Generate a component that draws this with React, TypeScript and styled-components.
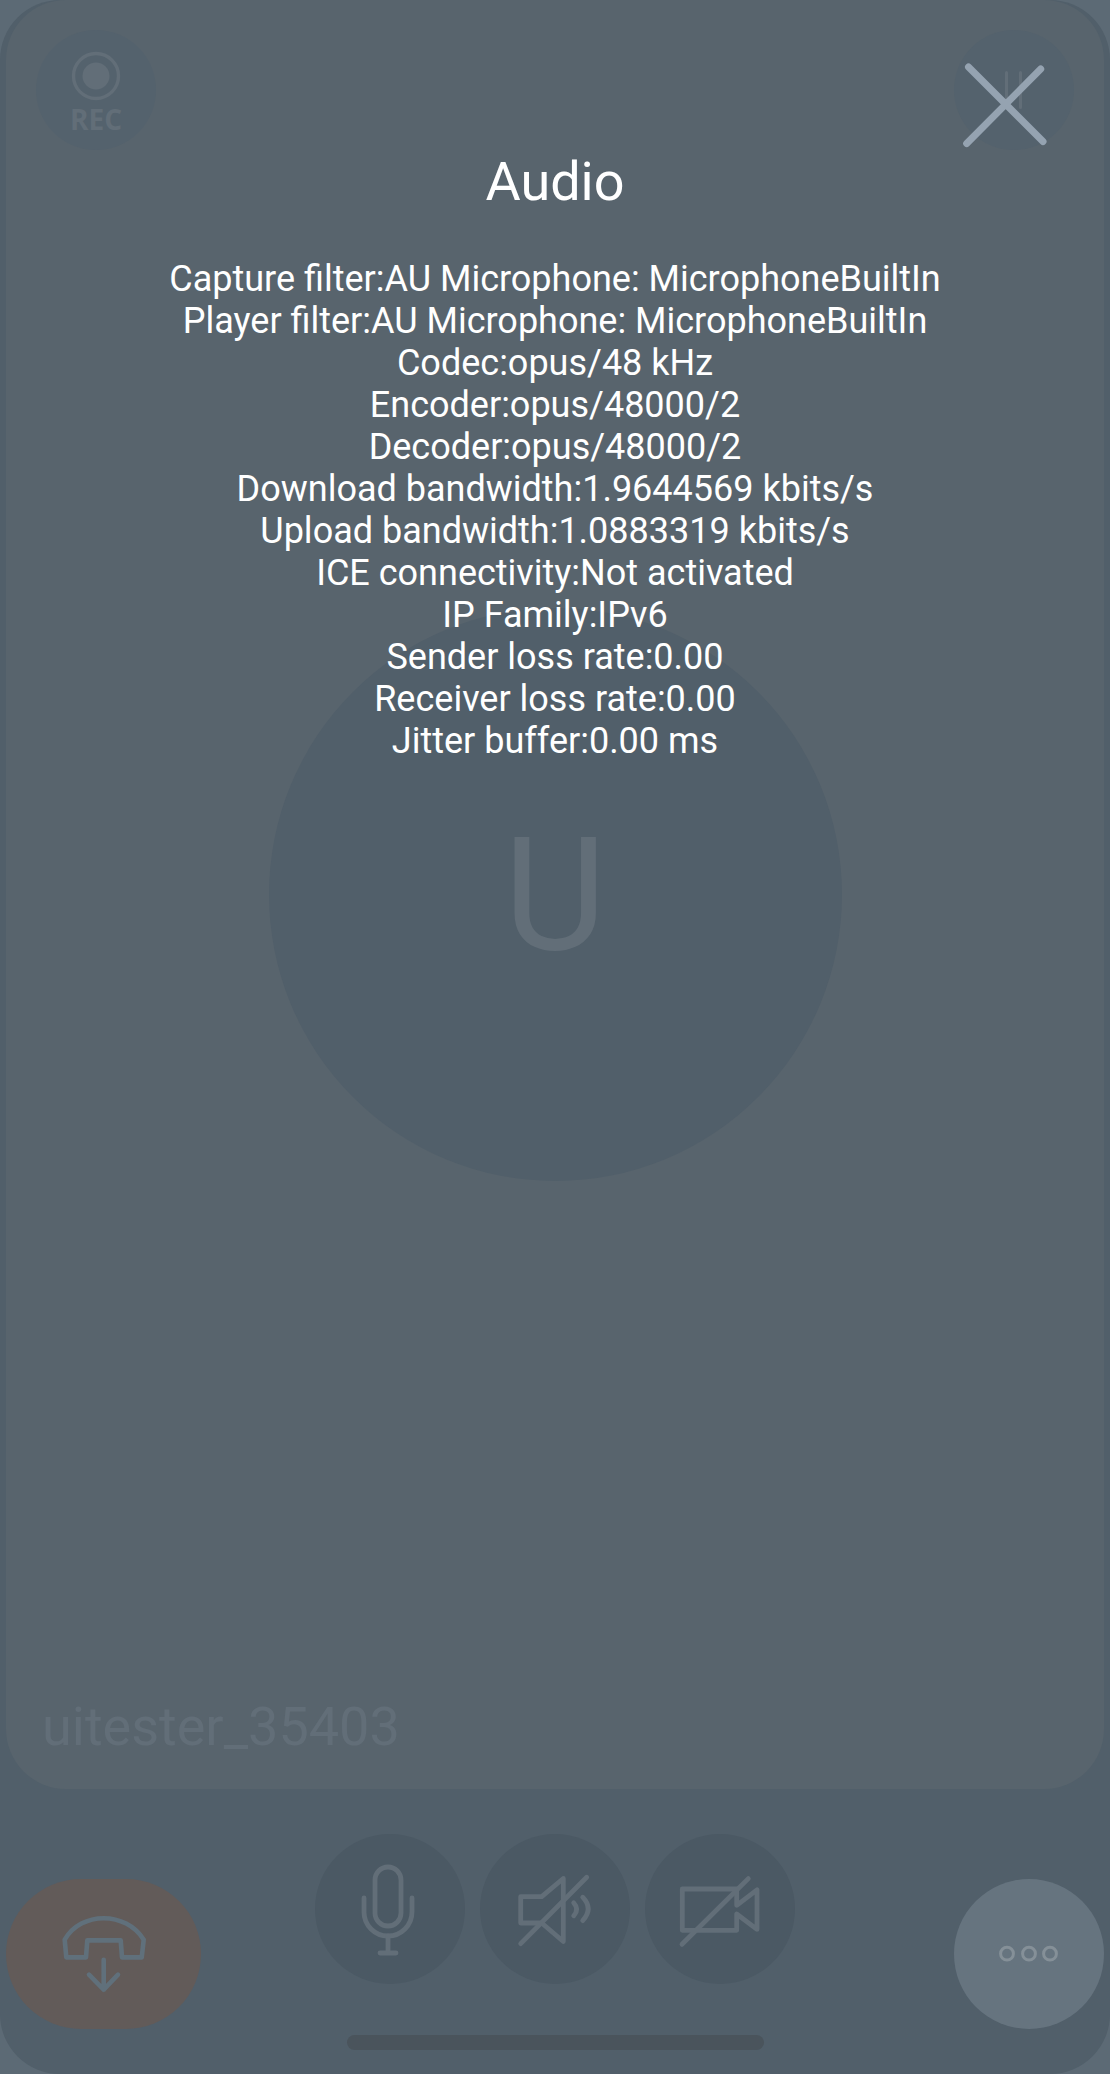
import React from "react";
import styled, { createGlobalStyle } from "styled-components";

const colors = {
  page: "#5c6a75",
  shell: "#515f6a",
  card: "#58646d",
  chip: "#54626d",
  faint: "#626e78",
  control: "#4b5964",
  hangup: "#625b59",
  hangupIcon: "#60707b",
  more: "#66747f",
  moreIcon: "#859098",
  close: "#95a3b1",
  handle: "#4a545c",
};

const GlobalStyle = createGlobalStyle`
  *, *::before, *::after { box-sizing: border-box; }
  body {
    margin: 0;
    background: ${colors.page};
    font-family: Roboto, "Liberation Sans", sans-serif;
  }
`;

const Screen = styled.div`
  display: grid;
  min-height: 100vh;

  & > * {
    grid-area: 1 / 1;
  }
`;

const CallScreen = styled.main`
  display: flex;
  flex-direction: column;
  padding: 0 6px 24px;
  border-radius: 60px;
  background: ${colors.shell};
`;

const ParticipantCard = styled.section`
  flex: 1;
  display: grid;
  grid-template-rows: 1fr auto 1fr;
  padding: 30px;
  border-radius: 60px;
  background: ${colors.card};
`;

const CardTop = styled.div`
  display: flex;
  justify-content: space-between;
  align-items: flex-start;
`;

const IconButton = styled.button<{ $size: number; $wide?: number; $bg: string; $fg: string }>`
  display: flex;
  flex-direction: column;
  align-items: center;
  justify-content: center;
  width: ${(p) => p.$wide ?? p.$size}px;
  height: ${(p) => p.$size}px;
  padding: 0;
  border: 0;
  border-radius: ${(p) => p.$size / 2}px;
  background: ${(p) => p.$bg};
  color: ${(p) => p.$fg};
  cursor: pointer;
`;

const RecordButton = styled(IconButton)`
  padding-top: 8px;
`;

const RecLabel = styled.span`
  font: 700 28px/36px "Open Sans", "Noto Sans", sans-serif;
`;

const Avatar = styled.div`
  justify-self: center;
  display: flex;
  align-items: center;
  justify-content: center;
  width: 573px;
  height: 573px;
  border-radius: 50%;
  background: ${colors.shell};
  color: ${colors.faint};
  font-size: 158px;
  line-height: 184px;
`;

const Username = styled.p`
  align-self: end;
  margin: 0;
  padding-left: 6px;
  color: ${colors.faint};
  font-size: 54px;
  line-height: 64px;
`;

const Controls = styled.div`
  display: grid;
  grid-template-columns: 1fr auto 1fr;
  align-items: end;
  padding-top: 45px;
`;

const ControlGroup = styled.div`
  display: flex;
  gap: 15px;
  padding-bottom: 45px;
`;

const EndSlot = styled.div`
  justify-self: end;
`;

const SheetHandle = styled.div`
  align-self: center;
  width: 417px;
  height: 15px;
  margin-top: 6px;
  border-radius: 8px;
  background: ${colors.handle};
`;

const StatsOverlay = styled.div`
  z-index: 1;
  display: flex;
  flex-direction: column;
  padding: 60px;
  color: #fff;
  text-align: center;
`;

const CloseRow = styled.div`
  display: flex;
  justify-content: flex-end;
`;

const Title = styled.h1`
  margin: 0 0 44px;
  font-size: 54px;
  font-weight: 400;
  line-height: 64px;
`;

const StatsList = styled.ul`
  margin: 0;
  padding: 0;
  list-style: none;
  font-size: 36px;
  line-height: 42px;
`;

const Glyph = styled.svg`
  display: block;
  fill: none;
  stroke: currentColor;
  stroke-linecap: round;
  stroke-linejoin: round;
`;

const stats: [string, string][] = [
  ["Capture filter", "AU Microphone: MicrophoneBuiltIn"],
  ["Player filter", "AU Microphone: MicrophoneBuiltIn"],
  ["Codec", "opus/48 kHz"],
  ["Encoder", "opus/48000/2"],
  ["Decoder", "opus/48000/2"],
  ["Download bandwidth", "1.9644569 kbits/s"],
  ["Upload bandwidth", "1.0883319 kbits/s"],
  ["ICE connectivity", "Not activated"],
  ["IP Family", "IPv6"],
  ["Sender loss rate", "0.00"],
  ["Receiver loss rate", "0.00"],
  ["Jitter buffer", "0.00 ms"],
];

const controls = [
  {
    label: "Mute microphone",
    paths: [
      "M60 46a13 13 0 0 1 26 0v33a13 13 0 0 1-26 0z",
      "M49 64v14a24 24 0 0 0 48 0V64",
      "M73 102v17M65 119h16",
    ],
  },
  {
    label: "Speaker",
    paths: [
      "M83.3 44.5L61.7 62.7h-21V89h21l21.6 18.5z",
      "M40.7 109.6L106.7 43.3",
      "M93.7 68.8q6 6.4 0 13",
      "M102.7 63.2q11 11.6 0 23.4",
    ],
  },
  {
    label: "Camera",
    paths: [
      "M37.3 55h54.4v16.3L112 55.8v39.6L91.7 80v16.3H37.3z",
      "M37 110.3L103.3 44.6",
    ],
  },
];

export default function App() {
  return (
    <>
      <GlobalStyle />
      <Screen>
        <CallScreen>
          <ParticipantCard>
            <CardTop>
              <RecordButton $size={120} $bg={colors.chip} $fg={colors.faint} aria-label="REC">
                <Glyph width="50" height="50" viewBox="0 0 50 50" strokeWidth="3.4">
                  <circle cx="25" cy="25" r="22.5" />
                  <circle cx="25" cy="25" r="13.5" fill="currentColor" stroke="none" />
                </Glyph>
                <RecLabel>REC</RecLabel>
              </RecordButton>
              <IconButton $size={120} $bg={colors.chip} $fg={colors.faint} aria-label="Pause">
                <Glyph width="120" height="120" viewBox="0 0 120 120" strokeWidth="3">
                  <path d="M52.5 42.5v35M66.5 42.5v35" />
                </Glyph>
              </IconButton>
            </CardTop>
            <Avatar>U</Avatar>
            <Username>uitester_35403</Username>
          </ParticipantCard>

          <Controls>
            <IconButton
              $size={150}
              $wide={195}
              $bg={colors.hangup}
              $fg={colors.hangupIcon}
              aria-label="Hang up"
            >
              <Glyph width="195" height="150" viewBox="0 0 195 150" strokeWidth="4.6">
                <path d="M58.7 60.7C75 32 120 32 137.7 60.7l-2 17.7H116l-1.3-17H81.3L80 78.4H60.3z" />
                <path d="M97.7 80.7v30M83 95.7l14.7 15 14.3-15" />
              </Glyph>
            </IconButton>
            <ControlGroup>
              {controls.map((c) => (
                <IconButton
                  key={c.label}
                  $size={150}
                  $bg={colors.control}
                  $fg={colors.faint}
                  aria-label={c.label}
                >
                  <Glyph width="150" height="150" viewBox="0 0 150 150" strokeWidth="4.8">
                    {c.paths.map((d) => (
                      <path key={d} d={d} />
                    ))}
                  </Glyph>
                </IconButton>
              ))}
            </ControlGroup>
            <EndSlot>
              <IconButton $size={150} $bg={colors.more} $fg={colors.moreIcon} aria-label="More">
                <Glyph width="150" height="150" viewBox="0 0 150 150" strokeWidth="3">
                  <circle cx="53" cy="74.7" r="6.4" />
                  <circle cx="75" cy="74.7" r="6.4" />
                  <circle cx="96" cy="74.7" r="6.4" />
                </Glyph>
              </IconButton>
            </EndSlot>
          </Controls>
          <SheetHandle />
        </CallScreen>

        <StatsOverlay role="dialog" aria-labelledby="stats-title">
          <CloseRow>
            <IconButton $size={90} $bg="transparent" $fg={colors.close} aria-label="Close">
              <Glyph width="90" height="90" viewBox="0 0 90 90" strokeWidth="7">
                <path d="M8.5 7L83 81.5M80.7 9L6.7 83.5" />
              </Glyph>
            </IconButton>
          </CloseRow>
          <Title id="stats-title">Audio</Title>
          <StatsList>
            {stats.map(([name, value]) => (
              <li key={name}>{`${name}:${value}`}</li>
            ))}
          </StatsList>
        </StatsOverlay>
      </Screen>
    </>
  );
}
